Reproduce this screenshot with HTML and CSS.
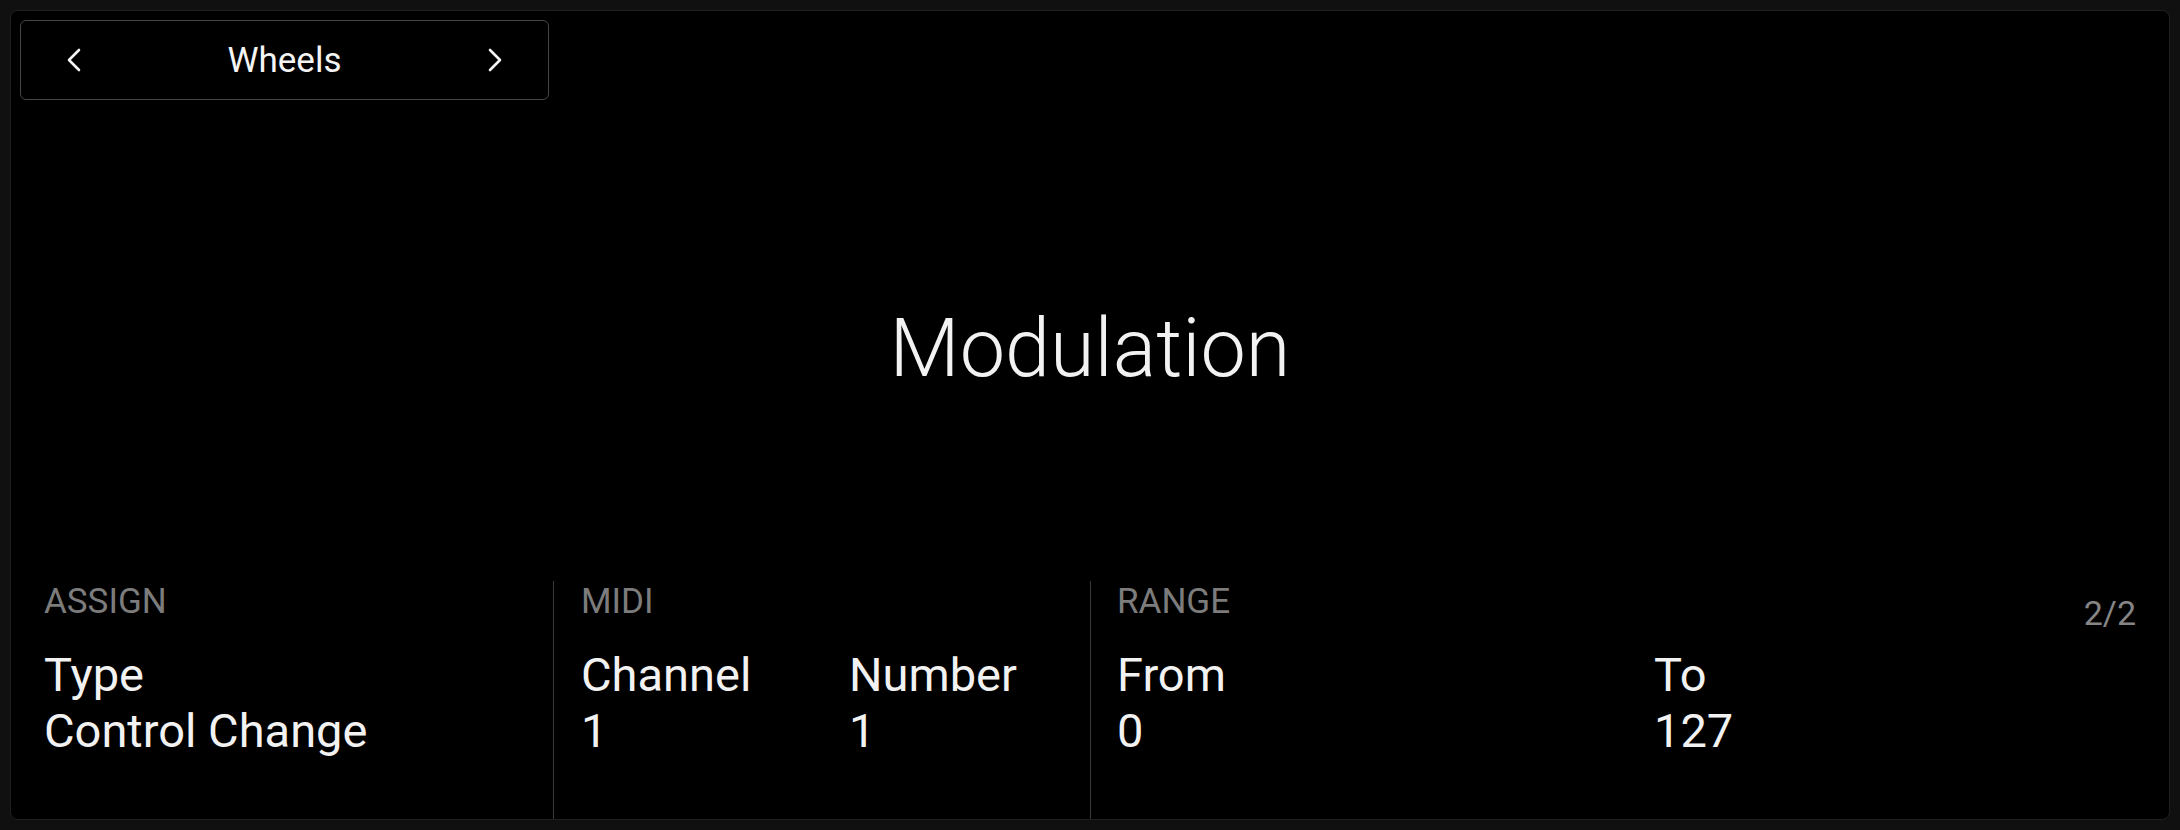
FILE: index.html
```html
<!DOCTYPE html>
<html>
<head>
<meta charset="utf-8">
<link rel="stylesheet" href="styles.css">
</head>
<body>
<div class="panel">
  <div class="top">
    <div class="selector">
      <svg class="chev" width="16" height="26" viewBox="0 0 16 26"><polyline points="13,3 3,13 13,23" fill="none" stroke="#f4f4f4" stroke-width="2.6" stroke-linecap="round" stroke-linejoin="round"/></svg>
      <span class="sel-label">Wheels</span>
      <svg class="chev" width="16" height="26" viewBox="0 0 16 26"><polyline points="3,3 13,13 3,23" fill="none" stroke="#f4f4f4" stroke-width="2.6" stroke-linecap="round" stroke-linejoin="round"/></svg>
    </div>
  </div>
  <div class="title-area">
    <div class="title">Modulation</div>
  </div>
  <div class="bottom">
    <div class="section s-assign">
      <div class="head"><span class="label">ASSIGN</span></div>
      <div class="fields one">
        <div class="field"><div class="name">Type</div><div class="val">Control Change</div></div>
      </div>
    </div>
    <div class="section s-midi">
      <div class="head"><span class="label">MIDI</span></div>
      <div class="fields midi">
        <div class="field"><div class="name">Channel</div><div class="val">1</div></div>
        <div class="field"><div class="name">Number</div><div class="val">1</div></div>
      </div>
    </div>
    <div class="section s-range">
      <div class="head"><span class="label">RANGE</span><span class="page">2/2</span></div>
      <div class="fields range">
        <div class="field"><div class="name">From</div><div class="val">0</div></div>
        <div class="field"><div class="name">To</div><div class="val">127</div></div>
      </div>
    </div>
  </div>
</div>
</body>
</html>
```
FILE: styles.css
```css
* { box-sizing: border-box; }
html, body { margin: 0; padding: 0; }
body {
  background: #101010;
  padding: 10px;
  height: 830px;
  font-family: Roboto, "Noto Sans", "Liberation Sans", sans-serif;
  color: #f2f2f2;
}
.panel {
  background: #000;
  border: 1px solid #1f1f1f;
  border-radius: 8px;
  height: 810px;
  display: flex;
  flex-direction: column;
  overflow: hidden;
}
.top {
  padding: 9px 0 0 9px;
  display: flex;
}
.selector {
  width: 529px;
  height: 80px;
  border: 1px solid #464646;
  border-radius: 6px;
  display: flex;
  align-items: center;
  justify-content: space-between;
  padding: 0 45px 0 45px;
}
.chev { display: block; }
.sel-label {
  font-size: 35px;
  font-weight: 400;
  color: #f4f4f4;
}
.title-area {
  flex: 1;
  display: flex;
  align-items: center;
  justify-content: center;
  padding-top: 17px;
}
.title {
  font-size: 81px;
  font-weight: 300;
  color: #f2f2f2;
  line-height: 94px;
}
.bottom {
  height: 238px;
  display: grid;
  grid-template-columns: 542px 537px 1fr;
}
.section {
  padding-top: 1px;
}
.s-assign { padding-left: 33px; }
.s-midi { border-left: 1px solid #3a3a3a; padding-left: 27px; }
.s-range { border-left: 1px solid #3a3a3a; padding-left: 26px; padding-right: 33px; }
.head {
  height: 40px;
  display: flex;
  justify-content: space-between;
  align-items: flex-start;
  font-size: 35px;
  line-height: 40px;
}
.label { color: #7c7c7c; }
.page { color: #858585; font-size: 34px; margin-top: 11px; }
.fields {
  margin-top: 25px;
  display: grid;
  font-size: 47px;
  line-height: 56px;
}
.fields.one { grid-template-columns: 1fr; }
.fields.midi { grid-template-columns: 268px 1fr; }
.fields.range { grid-template-columns: 537px 1fr; }
.name, .val { color: #f2f2f2; white-space: nowrap; }
```
